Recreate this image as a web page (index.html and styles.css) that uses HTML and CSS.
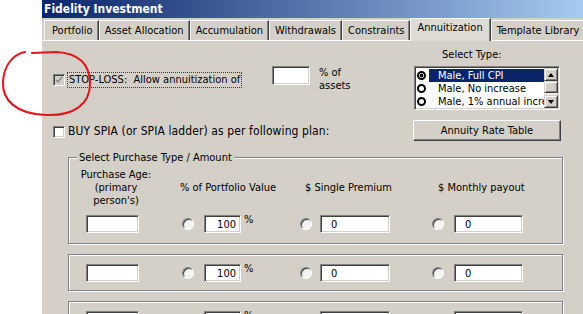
FILE: index.html
```html
<!DOCTYPE html>
<html lang="en">
<head>
    <meta charset="UTF-8">
    <meta name="viewport" content="width=device-width, initial-scale=1.0">
    <title>Fidelity Investment - Annuitization</title>
    <link rel="stylesheet" href="styles.css">
</head>
<body>
    <div class="window">
        <div class="titlebar">Fidelity Investment</div>

        <div class="tabs">
            <div class="tab first">Portfolio</div>
            <div class="tab">Asset Allocation</div>
            <div class="tab">Accumulation</div>
            <div class="tab">Withdrawals</div>
            <div class="tab">Constraints</div>
            <div class="tab active">Annuitization</div>
            <div class="tab">Template Library</div>
        </div>

        <div class="panel">
            <div class="top">
                <div class="options">
                    <div class="stoploss">
                        <div class="stop-option">
                            <span class="check disabled">
                                <svg width="8" height="8" viewBox="0 0 8 8"><polyline points="1,4 3,6 7,1" fill="none" stroke="#8a8780" stroke-width="1.5"/></svg>
                            </span>
                            <span class="focus-label">STOP-LOSS:&nbsp; Allow annuitization of</span>
                        </div>
                        <input class="field pct-assets" type="text" value="">
                        <div class="unit">% of<br>assets</div>
                    </div>

                    <div class="buy">
                        <span class="check"></span>
                        <span class="buy-label">BUY SPIA (or SPIA ladder) as per following plan:</span>
                    </div>
                </div>

                <div class="type-col">
                    <div class="type-label">Select Type:</div>
                    <div class="listbox">
                        <div class="list-items">
                            <div class="list-row"><span class="mark on"></span><span class="item selected">Male, Full CPI</span></div>
                            <div class="list-row"><span class="mark"></span><span class="item">Male, No increase</span></div>
                            <div class="list-row"><span class="mark"></span><span class="item">Male, 1% annual increase</span></div>
                            <div class="list-row"><span class="mark"></span><span class="item">Male, 2% annual increase</span></div>
                        </div>
                        <div class="scrollbar">
                            <div class="sb-btn"><span class="arrow-up"></span></div>
                            <div class="sb-thumb"></div>
                            <div class="sb-track"></div>
                            <div class="sb-btn"><span class="arrow-down"></span></div>
                        </div>
                    </div>
                    <div class="button">Annuity Rate Table</div>
                </div>
            </div>

            <fieldset class="group">
                <legend>Select Purchase Type / Amount</legend>
                <div class="purchase-grid">
                    <div class="head head-age">Purchase Age:<br>(primary<br>person's)</div>
                    <div class="head head-pct">% of Portfolio Value</div>
                    <div class="head head-single">$ Single Premium</div>
                    <div class="head head-monthly">$ Monthly payout</div>

                    <div class="cell"><input class="field age" type="text" value=""></div>
                    <div class="cell"><span class="radio"></span><input class="field pct" type="text" value="100"><span class="pct-sign">%</span></div>
                    <div class="cell"><span class="radio"></span><input class="field amount" type="text" value="0"></div>
                    <div class="cell"><span class="radio"></span><input class="field amount" type="text" value="0"></div>
                </div>
            </fieldset>

            <div class="group">
                <div class="purchase-grid">
                    <div class="cell"><input class="field age" type="text" value=""></div>
                    <div class="cell"><span class="radio"></span><input class="field pct" type="text" value="100"><span class="pct-sign">%</span></div>
                    <div class="cell"><span class="radio"></span><input class="field amount" type="text" value="0"></div>
                    <div class="cell"><span class="radio"></span><input class="field amount" type="text" value="0"></div>
                </div>
            </div>

            <div class="group">
                <div class="purchase-grid">
                    <div class="cell"><input class="field age" type="text" value=""></div>
                    <div class="cell"><span class="radio"></span><input class="field pct" type="text" value="100"><span class="pct-sign">%</span></div>
                    <div class="cell"><span class="radio"></span><input class="field amount" type="text" value="0"></div>
                    <div class="cell"><span class="radio"></span><input class="field amount" type="text" value="0"></div>
                </div>
            </div>
        </div>
    </div>

    <!-- hand drawn note around the stop-loss option -->
    <svg class="annotation" width="100" height="125" viewBox="0 0 100 125">
        <path d="M25 52 C14 54 4 64 3 82 C2 100 16 114 46 115 C74 116 90 104 90 84 C90 62 76 53 56 52 L32 53" fill="none" stroke="#e3141c" stroke-width="2" stroke-linecap="round"/>
    </svg>
</body>
</html>
```

FILE: styles.css
```css
* { margin: 0; padding: 0; box-sizing: border-box; }

body {
    font-family: "DejaVu Sans Condensed", "DejaVu Sans", sans-serif;
    font-stretch: condensed;
    font-size: 11px;
    line-height: 13px;
    color: #000;
    background: #fff;
    height: 314px;
    overflow: hidden;
    padding-left: 42px;
    position: relative;
}

.window {
    background: #d4d0c8;
    height: 314px;
    overflow: hidden;
}

.titlebar {
    height: 18px;
    line-height: 19px;
    padding-left: 2px;
    background: linear-gradient(to right, #0a246a, #a6caf0);
    color: #fff;
    font-size: 12px;
    font-weight: bold;
}

/* tab strip */
.tabs {
    display: flex;
    align-items: flex-end;
    height: 22px;
    padding-left: 2px;
    white-space: nowrap;
}

.tab {
    height: 20px;
    line-height: 19px;
    padding: 0 5px;
    border-top: 1px solid #fff;
    border-left: 1px solid #f4f3f0;
    border-right: 1px solid #404040;
    box-shadow: inset -1px 0 0 #808080;
    flex-shrink: 0;
}

.tab.first {
    padding-left: 7px;
}

.tab.active {
    height: 23px;
    line-height: 18px;
    padding: 0 7px 0 6px;
    background: #dedbd4;
    margin-bottom: -1px;
    position: relative;
}

.panel {
    border-top: 1px solid #fff;
}

/* upper part: options + type list */
.top {
    display: flex;
    padding-top: 7px;
}

.options {
    flex: 1;
    padding-left: 11px;
}

.stoploss {
    display: flex;
    align-items: flex-start;
    margin-top: 18px;
}

.stop-option {
    display: flex;
    align-items: center;
    width: 219px;
    margin-top: 6px;
}

.check {
    width: 12px;
    height: 12px;
    background: #fff;
    border: 1px solid;
    border-color: #808080 #fff #fff #808080;
    box-shadow: inset 1px 1px 0 #404040, inset -1px -1px 0 #d4d0c8;
    display: flex;
    align-items: center;
    justify-content: center;
    flex-shrink: 0;
}

.check.disabled {
    background: #d4d0c8;
}

.focus-label {
    margin-left: 2px;
    padding: 0 1px;
    line-height: 14px;
    border: 1px dotted #3c3c3c;
    white-space: nowrap;
}

.field {
    font: inherit;
    font-stretch: condensed;
    color: #000;
    background: #fff;
    height: 18px;
    border: 1px solid;
    border-color: #808080 #fff #fff #808080;
    box-shadow: inset 1px 1px 0 #404040, inset -1px -1px 0 #d4d0c8;
    outline: none;
}

.pct-assets {
    width: 38px;
    height: 19px;
}

.unit {
    margin-left: 9px;
}

.buy {
    display: flex;
    align-items: center;
    height: 13px;
    margin-top: 33px;
}

.buy-label {
    margin-left: 3px;
    font-size: 12px;
    letter-spacing: 0.1px;
    white-space: nowrap;
}

.type-col {
    width: 148px;
    margin-right: 22px;
}

.type-label {
    padding-left: 29px;
}

.listbox {
    display: flex;
    width: 146px;
    height: 44px;
    margin: 5px 0 0 1px;
    background: #fff;
    border: 1px solid;
    border-color: #808080 #fff #fff #808080;
    box-shadow: inset 1px 1px 0 #404040, inset -1px -1px 0 #d4d0c8;
    padding: 1px;
}

.list-items {
    flex: 1;
    overflow: hidden;
    padding-top: 1px;
}

.list-row {
    display: flex;
    align-items: center;
    height: 13px;
}

.mark {
    width: 9px;
    height: 9px;
    border: 2px solid #000;
    border-radius: 50%;
    margin: 0 3px 0 1px;
    flex-shrink: 0;
}

.mark.on {
    background: radial-gradient(circle, #000 1.6px, transparent 2.2px);
}

.item {
    flex: 1;
    padding-left: 9px;
    white-space: nowrap;
    overflow: hidden;
    line-height: 13px;
}

.item.selected {
    background: #0a246a;
    color: #fff;
}

.scrollbar {
    width: 14px;
    display: flex;
    flex-direction: column;
}

.sb-btn,
.sb-thumb {
    background: #d4d0c8;
    border: 1px solid;
    border-color: #d4d0c8 #404040 #404040 #d4d0c8;
    box-shadow: inset 1px 1px 0 #fff, inset -1px -1px 0 #808080;
}

.sb-btn {
    height: 13px;
    display: flex;
    align-items: center;
    justify-content: center;
}

.sb-thumb {
    height: 12px;
}

.sb-track {
    flex: 1;
    background: #ebe9e4;
}

.arrow-up {
    border-left: 3px solid transparent;
    border-right: 3px solid transparent;
    border-bottom: 4px solid #000;
}

.arrow-down {
    border-left: 3px solid transparent;
    border-right: 3px solid transparent;
    border-top: 4px solid #000;
}

.button {
    width: 148px;
    height: 21px;
    margin-top: 10px;
    line-height: 19px;
    text-align: center;
    background: #d4d0c8;
    border: 1px solid;
    border-color: #fff #404040 #404040 #fff;
    box-shadow: inset -1px -1px 0 #808080;
}

/* purchase groups */
.group {
    border: 1px solid #808080;
    box-shadow: 1px 1px 0 #fff, inset 1px 1px 0 #fff;
    margin: 10px 20px 0 26px;
    padding: 9px 10px 8px 11px;
    min-inline-size: 0;
}

fieldset.group {
    padding: 4px 10px 10px 11px;
}

.group legend {
    margin-left: -3px;
    padding: 0 2px;
    line-height: 13px;
    background: #d4d0c8;
}

.purchase-grid {
    display: grid;
    grid-template-columns: 102px 118px 132px 1fr;
    row-gap: 8px;
    align-items: center;
}

.head {
    white-space: nowrap;
}

.head-age {
    width: 72px;
    text-align: center;
}

.head-pct {
    margin-left: -2px;
}

.head-single {
    padding-left: 5px;
}

.head-monthly {
    padding-left: 6px;
}

.cell {
    display: flex;
    align-items: center;
}

.radio {
    width: 12px;
    height: 12px;
    border-radius: 50%;
    background: #f4f3f0;
    border: 1px solid;
    border-color: #808080 #fff #fff #808080;
    box-shadow: inset 1px 1px 0 #404040;
    flex-shrink: 0;
}

.age {
    width: 53px;
    margin-left: 6px;
}

.pct {
    width: 37px;
    margin-left: 10px;
    text-align: right;
    padding-right: 4px;
}

.pct-sign {
    align-self: flex-start;
    margin: -2px 0 0 3px;
}

.amount {
    margin-left: 8px;
    width: 70px;
    padding-left: 10px;
}

.cell:last-child .amount {
    margin-left: 10px;
    width: 69px;
}

.annotation {
    position: absolute;
    left: 0;
    top: 0;
    pointer-events: none;
}
```
